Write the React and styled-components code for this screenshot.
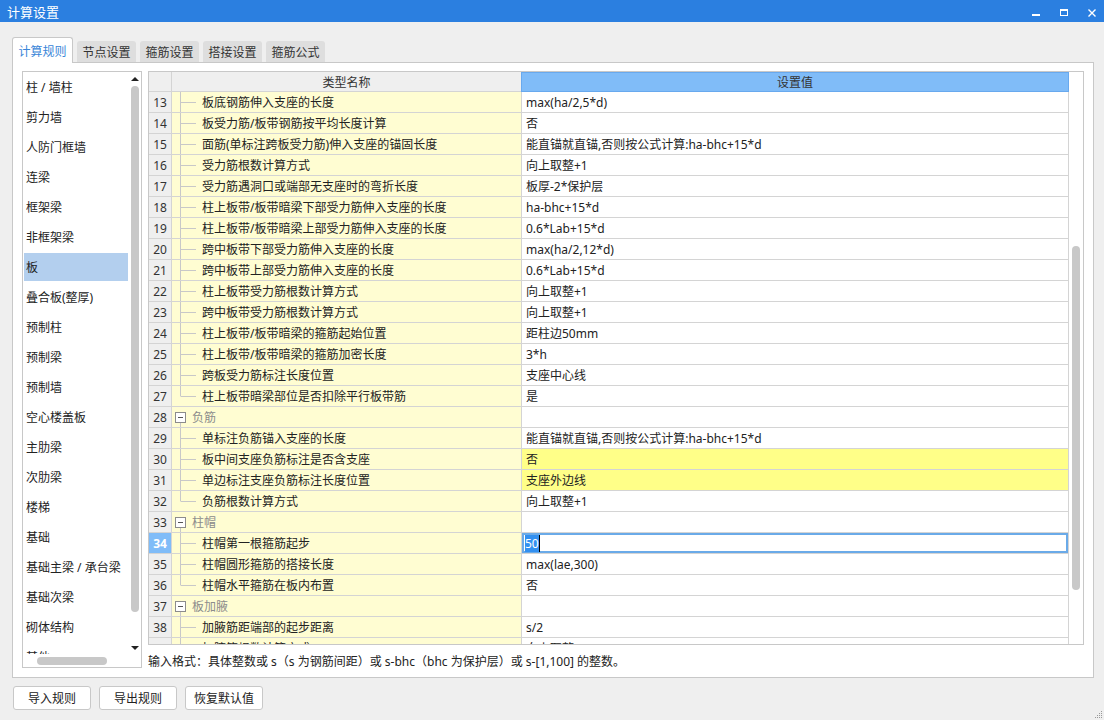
import React from 'react'
import styled, { createGlobalStyle } from 'styled-components'

const GlobalStyle = createGlobalStyle`
  html, body {
    margin: 0;
    padding: 0;
  }
  body {
    width: 1104px;
    height: 720px;
    overflow: hidden;
    background: #efefef;
    font-family: "Noto Sans", "Noto Sans CJK SC", sans-serif;
    font-size: 12px;
    color: #222;
  }
`

const Window = styled.div`
  position: relative;
  width: 1104px;
  height: 720px;
  display: flex;
  flex-direction: column;
`

const TitleBar = styled.div`
  height: 22px;
  background: #2b7fe0;
  color: #fff;
  display: flex;
  align-items: center;
  padding: 0 8px 0 7px;
  font-size: 13px;
`

const TitleControls = styled.div`
  margin-left: auto;
  display: flex;
  align-items: center;
  gap: 20px;
`

const Body = styled.div`
  padding: 15px 10px 0 12px;
  display: flex;
  flex-direction: column;
`

const TabBar = styled.div`
  display: flex;
  align-items: flex-end;
  gap: 4px;
  height: 25px;
`

const Tab = styled.div`
  box-sizing: border-box;
  display: flex;
  align-items: center;
  justify-content: center;
  width: ${p => (p.$active ? 61 : 59)}px;
  height: ${p => (p.$active ? 26 : 21)}px;
  margin-bottom: ${p => (p.$active ? -1 : 0)}px;
  background: ${p => (p.$active ? '#fff' : '#dedede')};
  color: ${p => (p.$active ? '#3a86d8' : '#333')};
  border: ${p => (p.$active ? '1px solid #c8c8c8' : 'none')};
  border-bottom: none;
  border-radius: 3px 3px 0 0;
  position: relative;
  z-index: 1;
  padding-top: ${p => (p.$active ? 1 : 0)}px;
`

const Panel = styled.div`
  box-sizing: border-box;
  height: 616px;
  background: #fff;
  border: 1px solid #c8c8c8;
  padding: 8px 9px 9px 9px;
  display: flex;
  gap: 6px;
`

const SideList = styled.div`
  box-sizing: border-box;
  width: 120px;
  height: 597px;
  border: 1px solid #c8c8c8;
  display: flex;
  flex-direction: column;
`

const SideMain = styled.div`
  flex: 1;
  display: flex;
  overflow: hidden;
`

const SideItems = styled.div`
  flex: 1;
  overflow: hidden;
  padding-top: 1px;
`

const SideItem = styled.div`
  height: 28px;
  margin: 0 0 2px 1px;
  padding-left: 2px;
  display: flex;
  align-items: center;
  white-space: nowrap;
  background: ${p => (p.$selected ? '#b3cfee' : 'transparent')};
`

const VScroll = styled.div`
  width: 13px;
  display: flex;
  flex-direction: column;
  align-items: center;
`

const ArrowIcon = styled.svg`
  display: block;
  margin-top: ${p => p.$top || 0}px;
  margin-bottom: ${p => p.$bottom || 0}px;
`

const SideThumb = styled.div`
  width: 8px;
  height: 526px;
  margin-top: 5px;
  border-radius: 4px;
  background: #c8c8c8;
`

const Spacer = styled.div`
  flex: 1;
`

const HScroll = styled.div`
  height: 13px;
  display: flex;
  align-items: center;
`

const HThumb = styled.div`
  width: 70px;
  height: 8px;
  margin-left: 14px;
  border-radius: 4px;
  background: #c8c8c8;
`

const RightCol = styled.div`
  flex: 1;
  display: flex;
  flex-direction: column;
`

const Grid = styled.div`
  box-sizing: border-box;
  height: 574px;
  border: 1px solid #c8c8c8;
  display: flex;
`

const Table = styled.div`
  flex: 1;
  overflow: hidden;
`

const Row = styled.div`
  display: grid;
  grid-template-columns: 23px 350px 1fr;
  height: ${p => (p.$head ? 20 : 21)}px;
`

const Cell = styled.div`
  box-sizing: border-box;
  border-right: 1px solid #d4d4d4;
  border-bottom: 1px solid #d4d4d4;
  display: flex;
  align-items: center;
  white-space: nowrap;
  overflow: hidden;
`

const NumCell = styled(Cell)`
  justify-content: center;
  background: ${p => (p.$selected ? '#80bcf8' : '#efefef')};
  color: ${p => (p.$selected ? '#fff' : '#333')};
  font-weight: ${p => (p.$selected ? 700 : 400)};
`

const HeadCell = styled(Cell)`
  justify-content: center;
  background: ${p => (p.$blue ? '#80bcf8' : '#efefef')};
  border-color: ${p => (p.$blue ? '#68a9ee' : '#d4d4d4')};
  ${p => p.$blue && 'border-left: 1px solid #68a9ee; border-top: 1px solid #68a9ee; margin-left: -1px;'}
  color: #333;
`

const NameCell = styled(Cell)`
  background: #fffdd2;
`

const NameText = styled.span`
  color: ${p => (p.$group ? '#8c8c8c' : '#222')};
`

const ValueCell = styled(Cell)`
  padding-left: 4px;
  background: ${p => (p.$hl ? '#ffff88' : '#fff')};
  ${p => p.$editing && 'box-shadow: inset 0 0 0 2px #6aaae8; padding-left: 3px;'}
`

const Selected = styled.span`
  background: #3390f0;
  color: #fff;
  border-right: 1px solid #000;
`

const GridScroll = styled.div`
  width: 14px;
  padding: 174px 0 0 3px;
  box-sizing: border-box;
`

const GridThumb = styled.div`
  width: 8px;
  height: 344px;
  border-radius: 4px;
  background: #c8c8c8;
`

const Hint = styled.div`
  margin-top: 8px;
  line-height: 18px;
  color: #222;
  white-space: nowrap;
`

const Footer = styled.div`
  display: flex;
  gap: 8px;
  margin: 8px 0 0 1px;
`

const Button = styled.div`
  box-sizing: border-box;
  width: 78px;
  height: 24px;
  border: 1px solid #c8c8c8;
  border-radius: 3px;
  background: #fff;
  display: flex;
  align-items: center;
  justify-content: center;
  color: #222;
`

const Grip = styled.svg`
  position: absolute;
  right: 1px;
  bottom: 1px;
`

const sideItems = [
  '柱 / 墙柱', '剪力墙', '人防门框墙', '连梁', '框架梁', '非框架梁', '板',
  '叠合板(整厚)', '预制柱', '预制梁', '预制墙', '空心楼盖板', '主肋梁', '次肋梁',
  '楼梯', '基础', '基础主梁 / 承台梁', '基础次梁', '砌体结构', '其他'
]

const rows = [
  { n: 13, name: '板底钢筋伸入支座的长度', value: 'max(ha/2,5*d)' },
  { n: 14, name: '板受力筋/板带钢筋按平均长度计算', value: '否' },
  { n: 15, name: '面筋(单标注跨板受力筋)伸入支座的锚固长度', value: '能直锚就直锚,否则按公式计算:ha-bhc+15*d' },
  { n: 16, name: '受力筋根数计算方式', value: '向上取整+1' },
  { n: 17, name: '受力筋遇洞口或端部无支座时的弯折长度', value: '板厚-2*保护层' },
  { n: 18, name: '柱上板带/板带暗梁下部受力筋伸入支座的长度', value: 'ha-bhc+15*d' },
  { n: 19, name: '柱上板带/板带暗梁上部受力筋伸入支座的长度', value: '0.6*Lab+15*d' },
  { n: 20, name: '跨中板带下部受力筋伸入支座的长度', value: 'max(ha/2,12*d)' },
  { n: 21, name: '跨中板带上部受力筋伸入支座的长度', value: '0.6*Lab+15*d' },
  { n: 22, name: '柱上板带受力筋根数计算方式', value: '向上取整+1' },
  { n: 23, name: '跨中板带受力筋根数计算方式', value: '向上取整+1' },
  { n: 24, name: '柱上板带/板带暗梁的箍筋起始位置', value: '距柱边50mm' },
  { n: 25, name: '柱上板带/板带暗梁的箍筋加密长度', value: '3*h' },
  { n: 26, name: '跨板受力筋标注长度位置', value: '支座中心线' },
  { n: 27, name: '柱上板带暗梁部位是否扣除平行板带筋', value: '是', kind: 'last' },
  { n: 28, name: '负筋', kind: 'group' },
  { n: 29, name: '单标注负筋锚入支座的长度', value: '能直锚就直锚,否则按公式计算:ha-bhc+15*d' },
  { n: 30, name: '板中间支座负筋标注是否含支座', value: '否', hl: true },
  { n: 31, name: '单边标注支座负筋标注长度位置', value: '支座外边线', hl: true },
  { n: 32, name: '负筋根数计算方式', value: '向上取整+1', kind: 'last' },
  { n: 33, name: '柱帽', kind: 'group' },
  { n: 34, name: '柱帽第一根箍筋起步', value: '50', sel: true },
  { n: 35, name: '柱帽圆形箍筋的搭接长度', value: 'max(lae,300)' },
  { n: 36, name: '柱帽水平箍筋在板内布置', value: '否', kind: 'last' },
  { n: 37, name: '板加腋', kind: 'group' },
  { n: 38, name: '加腋筋距端部的起步距离', value: 's/2' },
  { n: 39, name: '加腋筋根数计算方式', value: '向上取整+1' }
]

const LINE = '#c8c8c8'

const Connector = ({ kind }) => {
  if (kind === 'group') {
    return (
      <svg width="20" height="20" style={{ flex: 'none' }}>
        <rect x="3.5" y="5.5" width="10" height="10" fill="#fff" stroke="#8c8c8c" />
        <line x1="6" y1="10.5" x2="11" y2="10.5" stroke="#555" />
        <line x1="8.5" y1="16" x2="8.5" y2="20" stroke={LINE} />
      </svg>
    )
  }
  return (
    <svg width="30" height="20" style={{ flex: 'none' }}>
      <line x1="8.5" y1="0" x2="8.5" y2={kind === 'last' ? 10.5 : 20} stroke={LINE} />
      <line x1="9" y1="10.5" x2="24" y2="10.5" stroke={LINE} />
    </svg>
  )
}

const Arrow = ({ up, ...rest }) => (
  <ArrowIcon width="8" height="4" {...rest}>
    <polygon points={up ? '0,4 8,4 4,0' : '0,0 8,0 4,4'} fill="#222" />
  </ArrowIcon>
)

const App = () => {
  return (
    <Window>
      <GlobalStyle />
      <TitleBar>
        计算设置
        <TitleControls>
          <svg width="8" height="12"><rect x="0" y="9" width="8" height="2" fill="#fff" /></svg>
          <svg width="8" height="12">
            <rect x="0.5" y="4.5" width="7" height="6" fill="none" stroke="#fff" />
            <rect x="0" y="4" width="8" height="2" fill="#fff" />
          </svg>
          <svg width="8" height="12">
            <path d="M0.5 4.5 L7.5 11.5 M7.5 4.5 L0.5 11.5" stroke="#fff" strokeWidth="1.4" />
          </svg>
        </TitleControls>
      </TitleBar>
      <Body>
        <TabBar>
          <Tab $active>计算规则</Tab>
          <Tab>节点设置</Tab>
          <Tab>箍筋设置</Tab>
          <Tab>搭接设置</Tab>
          <Tab>箍筋公式</Tab>
        </TabBar>
        <Panel>
          <SideList>
            <SideMain>
              <SideItems>
                {sideItems.map(s => (
                  <SideItem key={s} $selected={s === '板'}>{s}</SideItem>
                ))}
              </SideItems>
              <VScroll>
                <Arrow up $top={5} />
                <SideThumb />
                <Spacer />
                <Arrow $bottom={4} />
              </VScroll>
            </SideMain>
            <HScroll>
              <HThumb />
            </HScroll>
          </SideList>
          <RightCol>
            <Grid>
              <Table>
                <Row $head>
                  <HeadCell />
                  <HeadCell>类型名称</HeadCell>
                  <HeadCell $blue>设置值</HeadCell>
                </Row>
                {rows.map(r => (
                  <Row key={r.n}>
                    <NumCell $selected={r.sel}>{r.n}</NumCell>
                    <NameCell>
                      <Connector kind={r.kind} />
                      <NameText $group={r.kind === 'group'}>{r.name}</NameText>
                    </NameCell>
                    <ValueCell $hl={r.hl} $editing={r.sel}>
                      {r.sel ? <Selected>{r.value}</Selected> : r.value}
                    </ValueCell>
                  </Row>
                ))}
              </Table>
              <GridScroll>
                <GridThumb />
              </GridScroll>
            </Grid>
            <Hint>输入格式：具体整数或 s（s 为钢筋间距）或 s-bhc（bhc 为保护层）或 s-[1,100] 的整数。</Hint>
          </RightCol>
        </Panel>
        <Footer>
          <Button>导入规则</Button>
          <Button>导出规则</Button>
          <Button>恢复默认值</Button>
        </Footer>
      </Body>
      <Grip width="8" height="8">
        {[[6, 0], [4, 2], [6, 2], [2, 4], [4, 4], [6, 4], [0, 6], [2, 6], [4, 6], [6, 6]].map(([x, y]) => (
          <rect key={`${x}-${y}`} x={x} y={y} width="1" height="1" fill="#999" />
        ))}
      </Grip>
    </Window>
  )
}

export default App
